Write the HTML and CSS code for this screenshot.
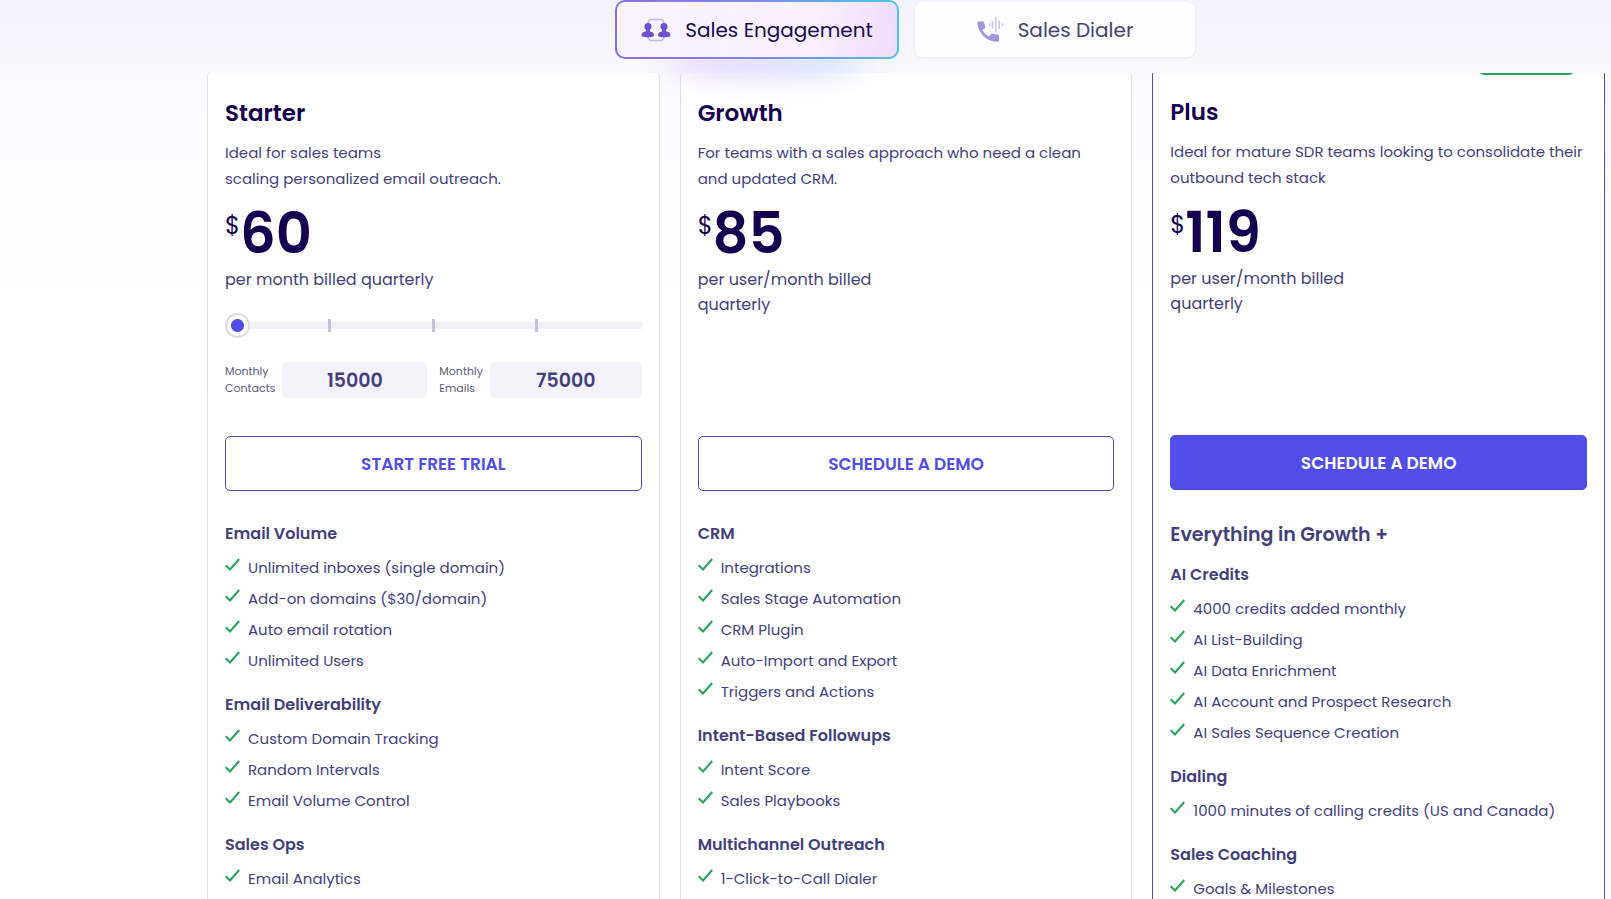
FILE: index.html
```
<!DOCTYPE html>
<html lang="en">
  <head>
    <meta charset="UTF-8">
    <meta name="viewport" content="width=device-width, initial-scale=1.0">
    <title>Pricing</title>
    <link rel="stylesheet" href="styles.css">
  </head>
  <body>
    <!-- Product tabs, stay on top of the cards -->
    <header class="tabs-bar">
      <button class="tab tab-active" type="button">
        <svg class="tab-icon" width="30" height="24" viewBox="0 0 30 24">
          <rect x="7" y="1.5" width="16" height="21" rx="4" fill="none" stroke="#c3b8e6" stroke-width="1.6"/>
          <g fill="#6f50cc">
            <circle cx="7" cy="8.5" r="3.6"/>
            <path d="M5 11h4v3H5zM0.5 17.5c0-3 2.8-4.3 6.3-4.3s6.3 1.3 6.3 4.3c0 1.2-2.5 1.8-6.3 1.8s-6.3-.6-6.3-1.8z"/>
            <circle cx="23" cy="8.5" r="3.6"/>
            <path d="M21 11h4v3h-4zM17 17.5c0-3 2.7-4.3 6.2-4.3s6.3 1.3 6.3 4.3c0 1.2-2.5 1.8-6.3 1.8s-6.2-.6-6.2-1.8z"/>
          </g>
        </svg>
        Sales Engagement
      </button>
      <button class="tab" type="button">
        <svg class="tab-icon" width="27" height="26" viewBox="0 0 27 26">
          <path d="M1.5 4.5h5.2l1.8 6-3 2.5c1.3 2.8 3.6 5 6.500 6.300l2.700-2.900 7.300 1.700v6.400C10.500 26 .5 16 .5 5.500c0-.6.4-1 1-1z" fill="#a594df"/>
          <g stroke="#cdc4ee" stroke-width="1.5" stroke-linecap="round">
            <path d="M12.5 7v1.500M15.500 4.500v6.500M18.800 1v13.500M22.200 4v7.500M25.500 7v1.500"/>
          </g>
        </svg>
        Sales Dialer
      </button>
    </header>

    <svg class="sprite" width="0" height="0">
      <symbol id="check" viewBox="0 0 15 13">
        <path d="M0.7 7.2l4.3 4.3L14.2 1" fill="none" stroke="#27a35a" stroke-width="2"/>
      </symbol>
    </svg>

    <main class="plans">
      <section class="card">
        <h2 class="plan-name">Starter</h2>
        <p class="plan-text">Ideal for sales teams<br>scaling personalized email outreach.</p>
        <div class="price"><span class="dollar">$</span>60</div>
        <div class="plan-details">
          <p class="period">per month billed quarterly</p>
          <input class="volume" type="range" min="0" max="4" value="0" aria-label="Monthly volume">
          <div class="limits">
            <div class="limit">
              <label for="contacts">Monthly<br>Contacts</label>
              <input id="contacts" type="text" value="15000" readonly>
            </div>
            <div class="limit">
              <label for="emails">Monthly<br>Emails</label>
              <input id="emails" type="text" value="75000" readonly>
            </div>
          </div>
        </div>
        <button class="btn" type="button">START FREE TRIAL</button>

        <h3 class="group">Email Volume</h3>
        <ul class="features">
          <li><svg><use href="#check"/></svg>Unlimited inboxes (single domain)</li>
          <li><svg><use href="#check"/></svg>Add-on domains ($30/domain)</li>
          <li><svg><use href="#check"/></svg>Auto email rotation</li>
          <li><svg><use href="#check"/></svg>Unlimited Users</li>
        </ul>
        <h3 class="group">Email Deliverability</h3>
        <ul class="features">
          <li><svg><use href="#check"/></svg>Custom Domain Tracking</li>
          <li><svg><use href="#check"/></svg>Random Intervals</li>
          <li><svg><use href="#check"/></svg>Email Volume Control</li>
        </ul>
        <h3 class="group">Sales Ops</h3>
        <ul class="features">
          <li><svg><use href="#check"/></svg>Email Analytics</li>
        </ul>
      </section>

      <section class="card">
        <h2 class="plan-name">Growth</h2>
        <p class="plan-text">For teams with a sales approach who need a clean and updated CRM.</p>
        <div class="price"><span class="dollar">$</span>85</div>
        <div class="plan-details">
          <p class="period">per user/month billed<br>quarterly</p>
        </div>
        <button class="btn" type="button">SCHEDULE A DEMO</button>

        <h3 class="group">CRM</h3>
        <ul class="features">
          <li><svg><use href="#check"/></svg>Integrations</li>
          <li><svg><use href="#check"/></svg>Sales Stage Automation</li>
          <li><svg><use href="#check"/></svg>CRM Plugin</li>
          <li><svg><use href="#check"/></svg>Auto-Import and Export</li>
          <li><svg><use href="#check"/></svg>Triggers and Actions</li>
        </ul>
        <h3 class="group">Intent-Based Followups</h3>
        <ul class="features">
          <li><svg><use href="#check"/></svg>Intent Score</li>
          <li><svg><use href="#check"/></svg>Sales Playbooks</li>
        </ul>
        <h3 class="group">Multichannel Outreach</h3>
        <ul class="features">
          <li><svg><use href="#check"/></svg>1-Click-to-Call Dialer</li>
        </ul>
      </section>

      <section class="card card-plus">
        <span class="ribbon"></span>
        <h2 class="plan-name">Plus</h2>
        <p class="plan-text">Ideal for mature SDR teams looking to consolidate their outbound tech stack</p>
        <div class="price"><span class="dollar">$</span>119</div>
        <div class="plan-details">
          <p class="period">per user/month billed<br>quarterly</p>
        </div>
        <button class="btn btn-fill" type="button">SCHEDULE A DEMO</button>

        <p class="everything">Everything in Growth +</p>
        <h3 class="group">AI Credits</h3>
        <ul class="features">
          <li><svg><use href="#check"/></svg>4000 credits added monthly</li>
          <li><svg><use href="#check"/></svg>AI List-Building</li>
          <li><svg><use href="#check"/></svg>AI Data Enrichment</li>
          <li><svg><use href="#check"/></svg>AI Account and Prospect Research</li>
          <li><svg><use href="#check"/></svg>AI Sales Sequence Creation</li>
        </ul>
        <h3 class="group">Dialing</h3>
        <ul class="features">
          <li><svg><use href="#check"/></svg>1000 minutes of calling credits (US and Canada)</li>
        </ul>
        <h3 class="group">Sales Coaching</h3>
        <ul class="features">
          <li><svg><use href="#check"/></svg>Goals &amp; Milestones</li>
        </ul>
      </section>
    </main>
  </body>
</html>
```
FILE: styles.css
```
* {
  box-sizing: border-box;
}

body {
  margin: 0;
  font-family: Poppins, Inter, "Open Sans", sans-serif;
  color: #433f7c;
  background: linear-gradient(#fafaff, #fdfdff 190px, #ffffff 400px) no-repeat #ffffff;
  overflow-x: hidden;
}

h2,
h3,
p,
ul {
  margin: 0;
  padding: 0;
}

button,
input {
  font-family: inherit;
}

/* tabs */
.tabs-bar {
  position: sticky;
  top: 0;
  z-index: 2;
  display: flex;
  justify-content: center;
  gap: 14px;
  padding: 0 6px 14px 207px;
  background: linear-gradient(#f4f3fe, #f8f8fe);
}

.tab {
  display: flex;
  align-items: center;
  justify-content: center;
  gap: 14px;
  width: 284px;
  height: 59px;
  border: 2px solid #f2f1fb;
  border-radius: 10px;
  background: #fdfdff;
  color: #47436f;
  font-size: 20px;
  cursor: pointer;
}

.tab-active {
  position: relative;
  border-color: transparent;
  color: #14094f;
  background:
    linear-gradient(100deg, #f8f4ff, #fbf0fd 70%, #efdcfb) padding-box,
    linear-gradient(75deg, #8d6be0, #7f86ee 50%, #4cc9ec) border-box;
}

.tab-active::after {
  content: "";
  position: absolute;
  z-index: -1;
  left: 50px;
  right: 30px;
  top: 50px;
  height: 24px;
  border-radius: 50%;
  background: linear-gradient(90deg, #e6ccff, #c9e0ff);
  filter: blur(14px);
}

.sprite {
  position: absolute;
}

/* cards */
.plans {
  display: grid;
  grid-template-columns: repeat(3, minmax(0, 1fr));
  gap: 20px;
  margin-top: -6px;
  padding: 0 6px 0 207px;
}

.card {
  padding: 27px 17px 30px;
  border: 1px solid #e0dff0;
  border-radius: 10px;
  background: #ffffff;
}

.card-plus {
  position: relative;
  margin-top: -31px;
  padding-top: 57px;
  border-color: #5a4bb0;
}

.ribbon {
  position: absolute;
  top: 11px;
  right: 28px;
  width: 99px;
  height: 27px;
  border-radius: 8px;
  background: #27a35a;
}

.plan-name {
  font-size: 23px;
  line-height: 36px;
  font-weight: 600;
  color: #14004f;
}

.plan-text {
  margin-top: 9px;
  font-size: 15px;
  line-height: 26px;
}

.price {
  display: flex;
  align-items: flex-start;
  margin-top: 14px;
  font-size: 56px;
  line-height: 56px;
  font-weight: 600;
  color: #14004f;
}

.dollar {
  margin-top: 6px;
  font-size: 24px;
  line-height: 28px;
  font-weight: 400;
}

.plan-details {
  height: 169px;
  margin-top: 5px;
}

.period {
  font-size: 16px;
  line-height: 25px;
}

/* slider with three stops */
.volume {
  display: block;
  -webkit-appearance: none;
  appearance: none;
  width: 100%;
  height: 25px;
  margin: 21px 0 24px;
  background:
    linear-gradient(#c5c0df, #c5c0df) 25% 50% / 3px 13px no-repeat,
    linear-gradient(#c5c0df, #c5c0df) 50% 50% / 3px 13px no-repeat,
    linear-gradient(#c5c0df, #c5c0df) 75% 50% / 3px 13px no-repeat,
    linear-gradient(#f2f1fa, #f2f1fa) 0 50% / 100% 7px no-repeat;
}

.volume::-webkit-slider-thumb {
  -webkit-appearance: none;
  width: 25px;
  height: 25px;
  border: 2px solid #dcdae8;
  border-radius: 50%;
  background: radial-gradient(circle, #514de6 6px, #ffffff 7px);
}

.limits {
  display: flex;
  gap: 12px;
}

.limit {
  display: flex;
  align-items: center;
  flex: 1;
  gap: 7px;
  min-width: 0;
}

.limit label {
  font-size: 11px;
  line-height: 17px;
  color: #5c5980;
}

.limit input {
  flex: 1;
  min-width: 0;
  height: 36px;
  padding: 0;
  border: none;
  border-radius: 5px;
  background: #f3f2f9;
  color: #433f7c;
  font-size: 19px;
  font-weight: 600;
  text-align: center;
}

.btn {
  width: 100%;
  height: 55px;
  margin-bottom: 14px;
  border: 1px solid #5a4bb0;
  border-radius: 5px;
  background: #ffffff;
  color: #514de6;
  font-size: 17px;
  font-weight: 600;
  cursor: pointer;
}

.btn-fill {
  border-color: #514de6;
  background: #514de6;
  color: #ffffff;
}

/* feature lists */
.everything {
  margin-top: 17px;
  margin-bottom: -3px;
  font-size: 19px;
  line-height: 28px;
  font-weight: 600;
}

.group {
  margin: 17px 0 6px;
  font-size: 16px;
  line-height: 24px;
  font-weight: 600;
}

.features {
  list-style: none;
}

.features li {
  display: flex;
  gap: 8px;
  font-size: 15px;
  line-height: 31px;
}

.features svg {
  flex: none;
  width: 15px;
  height: 13px;
  margin-top: 6px;
}
```
